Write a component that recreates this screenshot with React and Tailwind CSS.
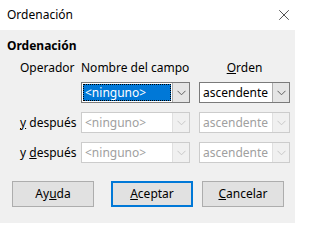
import { X } from 'lucide-react';

const font = { fontFamily: '"Noto Sans", "Segoe UI", sans-serif' };

function Chevron({ disabled }) {
	return (
		<svg width="9" height="6" viewBox="0 0 9 6" className="block">
			<path d="M0.5 0.8 L4.5 4.8 L8.5 0.8" fill="none" stroke={disabled ? '#c8c8c8' : '#606060'} strokeWidth="1" />
		</svg>
	);
}

function Combo({ value, width, selected = false, disabled = false }) {
	return (
		<div
			className={`flex h-[21px] border bg-white ${disabled ? 'border-[#cccccc]' : 'border-[#7a7a7a]'}`}
			style={{ width }}
		>
			<div className="flex-1 min-w-0 p-px">
				<div
					className={`h-full flex items-center px-[2px] leading-none ${
						selected ? 'bg-[#0078d7] text-white outline outline-1 outline-dotted outline-black -outline-offset-1' : ''
					} ${disabled ? 'text-[#a0a0a0]' : ''}`}
				>
					{value}
				</div>
			</div>
			<div
				className={`w-[17px] flex items-center justify-center border-l ${
					disabled ? 'bg-[#f0f0f0] border-[#e0e0e0]' : 'bg-[#e5e5e5] border-[#adadad]'
				}`}
			>
				<Chevron disabled={disabled} />
			</div>
		</div>
	);
}

function Button({ children, primary = false }) {
	return (
		<button
			type="button"
			className={`w-[82px] h-[26px] bg-[#e1e1e1] text-black flex items-center justify-center ${
				primary ? 'border-2 border-[#0078d7]' : 'border border-[#adadad]'
			}`}
		>
			{children}
		</button>
	);
}

export default function App() {
	const rows = [
		{ key: 0, name: <><u>y</u> después</> },
		{ key: 1, name: <>y <u>d</u>espués</> },
	];

	return (
		<div className="w-[295px] h-[223px] text-[12px] text-black overflow-hidden" style={font}>
			<div className="h-[30px] bg-white flex items-center justify-between pl-[7px] pr-[2px]">
				<span>Ordenación</span>
				<X size={18} strokeWidth={0.9} color="#000" />
			</div>
			<div className="h-[193px] bg-[#f0f0f0] pt-[8px]">
				<div className="pl-[7px] font-bold leading-4">Ordenación</div>
				<div className="mt-[6px] flex items-center leading-4">
					<div className="w-[81px] pl-[20px]">Operador</div>
					<div className="w-[118px]">Nombre del campo</div>
					<div className="w-[91px] text-center">
						<u>O</u>rden
					</div>
				</div>
				<div className="mt-[6px] flex flex-col gap-[9px]">
					<div className="flex items-center">
						<div className="w-[81px]" />
						<Combo value="<ninguno>" width={109} selected />
						<div className="w-[9px]" />
						<Combo value="ascendente" width={91} />
					</div>
					{rows.map((r) => (
						<div key={r.key} className="flex items-center">
							<div className="w-[81px] pl-[20px]">{r.name}</div>
							<Combo value="<ninguno>" width={109} disabled />
							<div className="w-[9px]" />
							<Combo value="ascendente" width={91} disabled />
						</div>
					))}
				</div>
				<div className="mt-[18px] flex pl-[12px]">
					<Button>
						Ay<u>u</u>da
					</Button>
					<div className="ml-[17px] mr-[9px]">
						<Button primary>
							<u>A</u>ceptar
						</Button>
					</div>
					<Button>
						<u>C</u>ancelar
					</Button>
				</div>
			</div>
		</div>
	);
}
